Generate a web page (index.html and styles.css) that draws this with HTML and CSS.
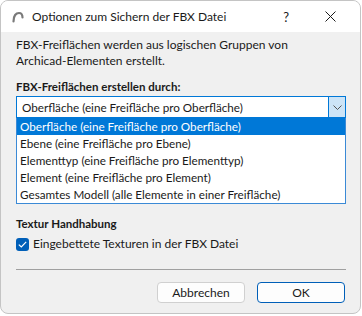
FILE: index.html
```html
<!DOCTYPE html>
<html lang="de">
<head>
    <meta charset="UTF-8">
    <meta name="viewport" content="width=device-width, initial-scale=1.0">
    <title>Optionen zum Sichern der FBX Datei</title>
    <link rel="stylesheet" href="styles.css">
</head>
<body>

    <div class="dialog">
        <!-- Title bar -->
        <div class="titlebar">
            <svg class="app-icon" width="12" height="12" viewBox="0 0 12 12">
                <path d="M1.5 10.5 C1.5 4.5 4 2 7 2 C9 2 10.5 3.5 10.5 6.5" fill="none" stroke="#7a7a7a" stroke-width="2.2" stroke-linecap="round"/>
            </svg>
            <span class="title">Optionen zum Sichern der FBX Datei</span>
            <span class="help">?</span>
            <svg class="close" width="11" height="11" viewBox="0 0 11 11">
                <path d="M0.5 0.5 L10.5 10.5 M10.5 0.5 L0.5 10.5" stroke="#1a1a1a" stroke-width="1"/>
            </svg>
        </div>

        <div class="content">
            <p class="intro">FBX-Freiflächen werden aus logischen Gruppen von<br>Archicad-Elementen erstellt.</p>

            <div class="label">FBX-Freiflächen erstellen durch:</div>

            <div class="combo">
                <div class="combo-field">Oberfläche (eine Freifläche pro Oberfläche)</div>
                <div class="combo-btn">
                    <svg width="9" height="5" viewBox="0 0 9 5">
                        <path d="M0.5 0.5 L4.5 4.5 L8.5 0.5" fill="none" stroke="#555" stroke-width="1"/>
                    </svg>
                </div>
            </div>
            <ul class="combo-list">
                <li class="selected">Oberfläche (eine Freifläche pro Oberfläche)</li>
                <li>Ebene (eine Freifläche pro Ebene)</li>
                <li>Elementtyp (eine Freifläche pro Elementtyp)</li>
                <li>Element (eine Freifläche pro Element)</li>
                <li>Gesamtes Modell (alle Elemente in einer Freifläche)</li>
            </ul>

            <div class="label section">Textur Handhabung</div>

            <label class="check-row">
                <span class="checkbox">
                    <svg width="9" height="7" viewBox="0 0 9 7">
                        <path d="M0.8 3.6 L3.3 6 L8.2 0.9" fill="none" stroke="#fff" stroke-width="1.2"/>
                    </svg>
                </span>
                Eingebettete Texturen in der FBX Datei
            </label>

            <div class="separator"></div>

            <div class="buttons">
                <button class="button">Abbrechen</button>
                <button class="button default">OK</button>
            </div>
        </div>
    </div>

</body>
</html>
```

FILE: styles.css
```css
body {
    margin: 0;
    background-color: #fff;
    font-family: Lato, "Noto Sans", sans-serif;
    font-size: 12px;
    color: #1a1a1a;
}
.dialog {
    width: 359px;
    height: 312px;
    border: 1px solid #c4c4c4;
    border-radius: 8px;
    background-color: #f0f0f0;
    overflow: hidden;
}
.titlebar {
    height: 31px;
    background-color: #fff;
    display: flex;
    align-items: center;
    padding-left: 11px;
}
.app-icon {
    margin-right: 8px;
}
.title {
    flex: 1;
}
.help {
    font-size: 13px;
    margin-right: 36px;
}
.close {
    margin-right: 24px;
}
.content {
    padding: 5px 14px 0 15px;
}
.intro {
    margin: 0;
    line-height: 16px;
}
.label {
    font-weight: bold;
    font-size: 11.5px;
    line-height: 16px;
    margin-top: 10px;
}
.label.section {
    margin-top: 12px;
}
.combo {
    display: flex;
    height: 22px;
    margin-top: 1px;
    border: 1px solid #0078d7;
    background-color: #fff;
    box-sizing: border-box;
    font-size: 11.7px;
}
.combo-field {
    flex: 1;
    line-height: 20px;
    padding-left: 5px;
}
.combo-btn {
    width: 16px;
    background-color: #cce4f7;
    border-left: 1px solid #0078d7;
    display: flex;
    align-items: center;
    justify-content: center;
}
.combo-list {
    list-style: none;
    margin: 0;
    padding: 0;
    border: 1px solid #3b8ad6;
    border-top: none;
    background-color: #fff;
    font-size: 11.7px;
}
.combo-list li {
    height: 17px;
    line-height: 17px;
    padding-left: 3px;
}
.combo-list li.selected {
    background-color: #0078d7;
    color: #fff;
}
.check-row {
    display: flex;
    align-items: center;
    margin-top: 4px;
    line-height: 16px;
}
.checkbox {
    width: 13px;
    height: 13px;
    border-radius: 3px;
    background-color: #005fb8;
    display: flex;
    align-items: center;
    justify-content: center;
    margin-right: 4px;
}
.separator {
    height: 1px;
    background-color: #a0a0a0;
    margin-top: 17px;
}
.buttons {
    display: flex;
    justify-content: flex-end;
    gap: 12px;
    margin-top: 12px;
    padding-right: 1px;
}
.button {
    width: 88px;
    height: 21px;
    font-family: inherit;
    font-size: 12px;
    color: #1a1a1a;
    background-color: #fdfdfd;
    border: 1px solid #d0d0d0;
    border-radius: 4px;
    padding: 0;
}
.button.default {
    border-color: #005fb8;
}
```
